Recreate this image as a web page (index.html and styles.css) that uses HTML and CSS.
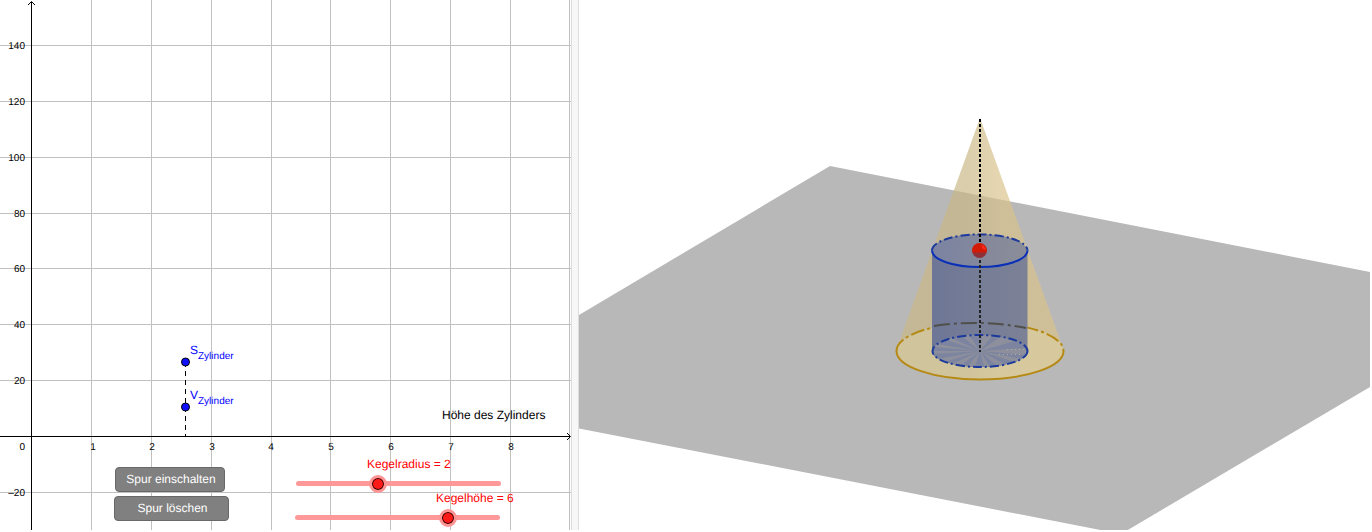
FILE: index.html
```html
<!DOCTYPE html>
<html lang="de">
<head>
<meta charset="utf-8">
<title>Zylinder im Kegel</title>
<link rel="stylesheet" href="styles.css">
</head>
<body>
<main class="workspace">
  <section class="graph" aria-label="Grafik">
    <svg class="plot" aria-hidden="true">
      <path class="grid" d="M91.5 0V2000M151.5 0V2000M211.5 0V2000M271.5 0V2000M330.5 0V2000M390.5 0V2000M450.5 0V2000M510.5 0V2000M569.5 0V2000M0 45.5H2000M0 101.5H2000M0 157.5H2000M0 213.5H2000M0 268.5H2000M0 324.5H2000M0 380.5H2000M0 492.5H2000"/>
      <path class="axis" d="M31.5 2V2000M0 436.5H570M28 5L31.5 1.500L35 5M567 433L570.5 436.500L567 440"/>
      <g class="tick tick-y">
        <text x="25" y="49">140</text>
        <text x="25" y="105">120</text>
        <text x="25" y="161">100</text>
        <text x="25" y="217">80</text>
        <text x="25" y="272">60</text>
        <text x="25" y="328">40</text>
        <text x="25" y="384">20</text>
        <text x="25" y="450">0</text>
        <text x="25" y="496">–20</text>
      </g>
      <g class="tick tick-x">
        <text x="93" y="450">1</text>
        <text x="152" y="450">2</text>
        <text x="212" y="450">3</text>
        <text x="271" y="450">4</text>
        <text x="331" y="450">5</text>
        <text x="391" y="450">6</text>
        <text x="451" y="450">7</text>
        <text x="511" y="450">8</text>
      </g>
      <text class="caption" x="442" y="419">Höhe des Zylinders</text>
      <path class="drop" d="M185.500 362V436"/>
      <circle class="point" cx="185.500" cy="362" r="4"/>
      <circle class="point" cx="185.500" cy="407" r="4"/>
      <text class="name" x="190" y="354">S<tspan class="sub" dy="5">Zylinder</tspan></text>
      <text class="name" x="190" y="399">V<tspan class="sub" dy="5">Zylinder</tspan></text>
    </svg>
    <div class="trace-buttons">
      <button class="trace trace-on" type="button">Spur einschalten</button>
      <button class="trace trace-clear" type="button">Spur löschen</button>
    </div>
    <div class="slider slider-radius">
      <label class="slider-label" for="radius">Kegelradius = 2</label>
      <div class="slider-rail">
        <input class="slider-input" id="radius" type="range" min="0" max="5" step="0.1" value="2">
      </div>
    </div>
    <div class="slider slider-height">
      <label class="slider-label" for="height">Kegelhöhe = 6</label>
      <div class="slider-rail">
        <input class="slider-input" id="height" type="range" min="0" max="8" step="0.1" value="6">
      </div>
    </div>
  </section>
  <div class="splitter"></div>
  <section class="space" aria-label="3D Grafik">
    <svg class="scene" viewBox="0 0 791 530" preserveAspectRatio="xMinYMin slice" aria-hidden="true">
      <defs>
        <linearGradient id="cone">
          <stop offset="0" stop-color="#cab886"/>
          <stop offset=".42" stop-color="#c9b685"/>
          <stop offset=".62" stop-color="#dac38b"/>
          <stop offset="1" stop-color="#dac38b"/>
        </linearGradient>
        <linearGradient id="tube">
          <stop offset="0" stop-color="#6e7697"/>
          <stop offset=".5" stop-color="#767d96"/>
          <stop offset="1" stop-color="#7c8196"/>
        </linearGradient>
        <linearGradient id="lid">
          <stop offset="0" stop-color="#7b83a2"/>
          <stop offset=".6" stop-color="#85899a"/>
          <stop offset="1" stop-color="#8b8d98"/>
        </linearGradient>
        <clipPath id="ball"><circle cx="400.500" cy="250.500" r="7.500"/></clipPath>
      </defs>
      <path fill="#b8b8b8" d="M0 315L251 166L791 272V387L542 534L0 428.500Z"/>
      <path fill="url(#cone)" fill-opacity=".68" d="M401 118L484 348A83.500 28.500 0 1 1 318 348Z"/>
      <ellipse cx="401" cy="351" rx="83.500" ry="28.500" fill="#e4d6a4" fill-opacity=".4"/>
      <path class="rim-back" d="M317.500 351A83.500 28.500 0 0 1 484.500 351"/>
      <path class="rim" d="M317.500 351A83.500 28.500 0 0 0 484.500 351"/>
      <path fill="url(#tube)" d="M353 250.500V351A47.500 16 0 0 0 448.500 351V250.500Z"/>
      <path stroke="#50504b" stroke-width="2" fill="none" stroke-dasharray="16 4 3 4" d="M355 326Q401 319 447 328"/>
      <ellipse cx="401" cy="351" rx="47.500" ry="16" fill="#7c849f"/>
      <path fill="#8d909c" d="M401 351L355 347L358 344ZM401 351L367 340L373 338ZM401 351L383 336L390 335ZM401 351L403 335L413 336ZM401 351L421 337L436 341ZM401 351L448 348L448 355ZM401 351L443 359L436 362ZM401 351L427 365L418 366ZM401 351L411 367L405 367ZM401 351L396 367L389 366ZM401 351L381 366L373 364ZM401 351L366 362L359 359ZM401 351L354 354L354 351Z"/>
      <path stroke="#aeac9e" stroke-dasharray="1 3" fill="none" d="M428 349.500H445M420 354.500H443"/>
      <ellipse class="circle-hidden" cx="401" cy="351" rx="47.500" ry="16"/>
      <ellipse cx="400.500" cy="250.500" rx="47.500" ry="16.500" fill="url(#lid)"/>
      <path class="circle-hidden" d="M353 250.500A47.500 16 0 0 1 448.500 250.500"/>
      <path class="circle-front" d="M353 250.500A47.500 16.500 0 0 0 448.500 250.500"/>
      <path class="altitude" d="M401 119V243"/>
      <path class="altitude altitude-inner" d="M401 260V352"/>
      <g clip-path="url(#ball)">
        <path fill="#d31a05" d="M393 243H408V253H393Z"/>
        <path fill="#ff2a20" d="M402 245L405 246L407 250L404 249Z"/>
        <path fill="#8f3038" d="M393 252.500H408V259H393Z"/>
      </g>
    </svg>
  </section>
</main>
</body>
</html>
```
FILE: styles.css
```css
* {
  box-sizing: border-box;
}

body {
  margin: 0;
  background: #fff;
  font: 12px/14px "Liberation Sans", Arial, sans-serif;
  text-rendering: geometricPrecision;
}

.workspace {
  display: flex;
  height: 100vh;
  padding: 0 2px 2px 0;
}

.graph,
.space {
  position: relative;
  min-width: 0;
  overflow: hidden;
}

.graph {
  flex: 571 1 0;
}

.space {
  flex: 791 1 0;
}

.splitter {
  flex: none;
  width: 8px;
  background: #f7f7f7;
  border: solid #dcdcdc;
  border-width: 0 1px;
}

.plot,
.scene {
  display: block;
  width: 100%;
  height: 100%;
}

.grid {
  fill: none;
  stroke: #c0c0c0;
}

.axis {
  fill: none;
  stroke: #000;
}

.tick {
  font-size: 10px;
  fill: #000;
}

.tick-y {
  text-anchor: end;
}

.tick-x {
  text-anchor: middle;
}

.caption {
  font-size: 12px;
}

.name {
  font-size: 12px;
  fill: #00f;
}

.sub {
  font-size: 10px;
}

.drop {
  stroke: #000;
  stroke-dasharray: 5 4;
}

.point {
  fill: #1010ff;
  stroke: #000;
}

.trace-buttons {
  position: absolute;
  left: 114px;
  top: 467px;
  display: flex;
  flex-direction: column;
  align-items: flex-start;
  gap: 4px;
}

.trace {
  height: 25px;
  padding: 0 0 2px 2px;
  border: 1px solid #686868;
  border-radius: 4px;
  background: #808080;
  color: #fff;
  font: inherit;
  text-rendering: inherit;
}

.trace-on {
  width: 110px;
  margin-left: 1px;
}

.trace-clear {
  width: 115px;
}

.slider {
  position: absolute;
  display: flex;
  flex-direction: column;
  gap: 10px;
  width: 205px;
}

.slider-radius {
  left: 296px;
  top: 457px;
}

.slider-height {
  left: 295px;
  top: 491px;
}

.slider-label {
  color: #f00;
  white-space: nowrap;
}

.slider-radius .slider-label {
  padding-left: 71px;
}

.slider-height .slider-label {
  padding-left: 141px;
}

.slider-rail {
  display: flex;
  align-items: center;
  height: 5px;
  border-radius: 3px;
  background: #ff9999;
}

.slider-input {
  appearance: none;
  flex: 1;
  height: 18px;
  margin: 0 -7px;
  background: none;
}

.slider-input::-webkit-slider-thumb {
  appearance: none;
  width: 18px;
  height: 18px;
  border: 3px solid #ff9494;
  border-radius: 50%;
  background: #ff1a1a;
  box-shadow: inset 0 0 0 1px #200;
}

.rim,
.rim-back {
  fill: none;
  stroke: #b58a14;
  stroke-width: 2;
}

.rim-back {
  stroke-dasharray: 14 3 3 3;
}

.circle-hidden,
.circle-front {
  fill: none;
  stroke: #1c3a9c;
  stroke-width: 2;
}

.circle-hidden {
  stroke-dasharray: 9 3 2 3;
}

.circle-front {
  stroke: #0a30b8;
}

.altitude {
  fill: none;
  stroke: #000;
  stroke-width: 2;
  stroke-dasharray: 3 2;
}

.altitude-inner {
  stroke: #222;
}
```
